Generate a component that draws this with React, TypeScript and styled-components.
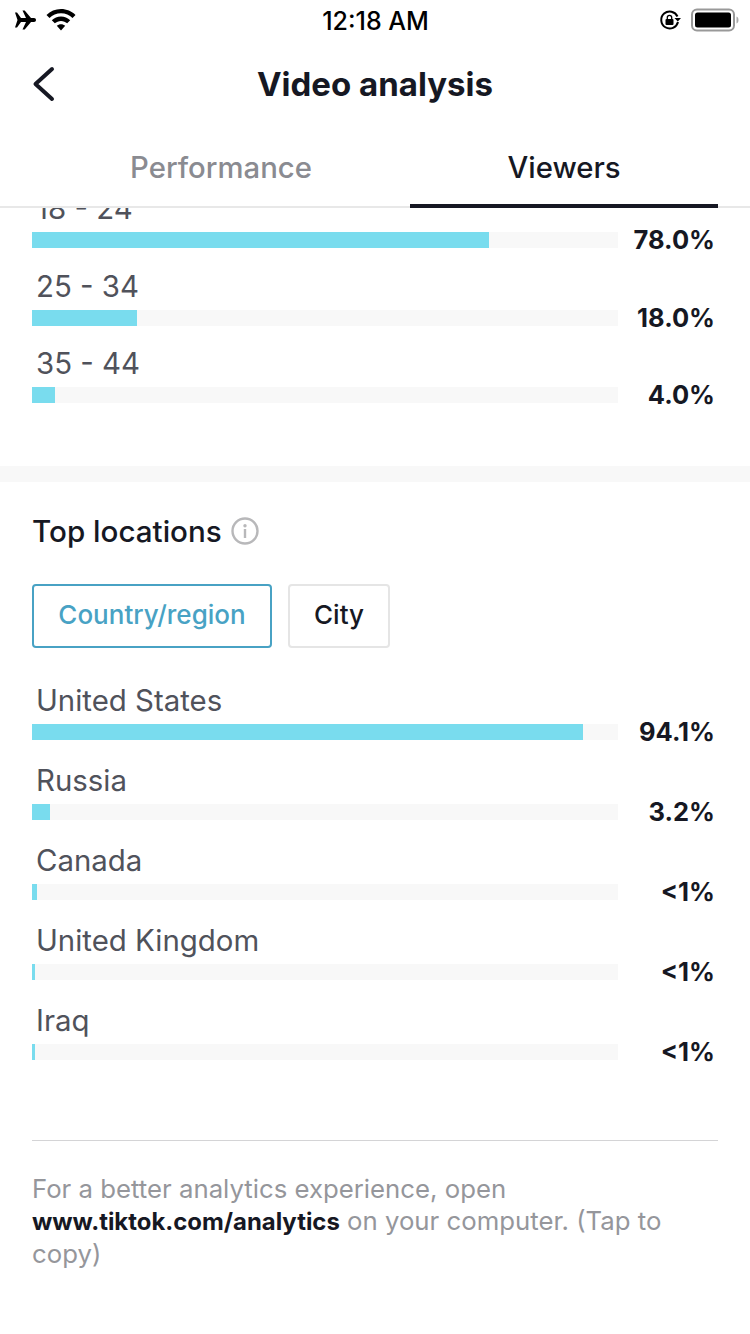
import styled, { createGlobalStyle } from "styled-components";

const GlobalStyle = createGlobalStyle`
  html, body {
    margin: 0;
    padding: 0;
    background: #fff;
  }

  body {
    font-family: "Inter", "Liberation Sans", sans-serif;
    color: #161823;
  }
`;

const Page = styled.div`
  width: 750px;
  height: 1334px;
  display: flex;
  flex-direction: column;
  overflow: hidden;
  background: #fff;
`;

const StatusBar = styled.div`
  height: 40px;
  flex: none;
  display: grid;
  grid-template-columns: 1fr auto 1fr;
  align-items: center;
  padding: 0 11px 0 12px;
  color: #000;
`;

const StatusLeft = styled.div`
  display: flex;
  align-items: center;
  gap: 10px;
  padding-left: 2px;
`;

const StatusRight = styled.div`
  display: flex;
  align-items: center;
  justify-content: flex-end;
  gap: 10px;
`;

const Clock = styled.div`
  font-size: 25px;
  font-weight: 500;
  padding-top: 1px;
`;

const NavBar = styled.div`
  height: 88px;
  flex: none;
  display: flex;
  align-items: center;
  justify-content: center;
  position: relative;
`;

const BackButton = styled.div`
  position: absolute;
  left: 31px;
  top: 26px;
  display: flex;
`;

const Title = styled.div`
  font-size: 33px;
  font-weight: 700;
`;

const Tabs = styled.div`
  height: 80px;
  flex: none;
  display: grid;
  grid-template-columns: 1fr 308px;
  padding: 0 32px;
  border-bottom: 2px solid #e8e8e8;
  box-sizing: border-box;
`;

const Tab = styled.div<{ $active?: boolean }>`
  display: flex;
  align-items: center;
  justify-content: center;
  font-size: 29.3px;
  font-weight: 500;
  padding-top: 2px;
  margin-bottom: -2px;
  color: ${({ $active }) => ($active ? "#161823" : "#8a8b91")};
  border-bottom: 4px solid ${({ $active }) => ($active ? "#161823" : "transparent")};
`;

const Scroller = styled.div`
  flex: 1;
  overflow: hidden;
`;

const AgeList = styled.div`
  padding: 0 32px;
  height: 258px;
  display: flex;
  flex-direction: column;
  gap: 37.5px;
  box-sizing: border-box;
`;

const LocationList = styled.div`
  padding: 0 32px;
  display: flex;
  flex-direction: column;
  gap: 40px;
`;

const Row = styled.div`
  height: 40px;
  display: grid;
  grid-template-columns: 586px 1fr;
  position: relative;
`;

const RowLabel = styled.div`
  position: absolute;
  left: 4px;
  bottom: 21px;
  font-size: 29.4px;
  line-height: 36px;
  color: #50525b;
  white-space: nowrap;
`;

const Track = styled.div`
  height: 16px;
  margin-top: 24px;
  background: #f8f8f8;
`;

const Fill = styled.div`
  height: 100%;
  background: #79dcee;
`;

const Percent = styled.div`
  margin-top: 18px;
  padding-right: 3px;
  text-align: right;
  font-size: 25.5px;
  line-height: 28px;
  font-weight: 700;
  white-space: nowrap;
`;

const Divider = styled.div`
  height: 16px;
  background: #f8f8f8;
`;

const SectionHead = styled.div`
  display: flex;
  align-items: center;
  gap: 9px;
  padding: 30px 32px 2px;
  height: 38px;
`;

const SectionTitle = styled.div`
  font-size: 29.6px;
  font-weight: 500;
`;

const Filters = styled.div`
  display: flex;
  gap: 16px;
  padding: 32px 32px 0;
  height: 64px;
  margin-bottom: 52px;
`;

const Filter = styled.div<{ $active?: boolean; $width: number }>`
  width: ${({ $width }) => $width}px;
  height: 64px;
  box-sizing: border-box;
  display: flex;
  align-items: center;
  justify-content: center;
  border-radius: 4px;
  font-size: 26px;
  font-weight: 500;
  padding-bottom: 3px;
  border: 2px solid ${({ $active }) => ($active ? "#48a2c4" : "#e5e5e5")};
  color: ${({ $active }) => ($active ? "#48a2c4" : "#161823")};
`;

const Footer = styled.div`
  margin: 80px 32px 0;
  padding-top: 32px;
  border-top: 1px solid #d4d4d6;
  font-size: 25.75px;
  line-height: 32px;
  color: #95969b;
`;

const FooterLink = styled.span`
  font-size: 23.9px;
  font-weight: 700;
  color: #161823;
`;

const ages = [
  { label: "18 - 24", value: "78.0%", width: 457 },
  { label: "25 - 34", value: "18.0%", width: 105 },
  { label: "35 - 44", value: "4.0%", width: 23 },
];

const locations = [
  { label: "United States", value: "94.1%", width: 551 },
  { label: "Russia", value: "3.2%", width: 18 },
  { label: "Canada", value: "<1%", width: 5 },
  { label: "United Kingdom", value: "<1%", width: 3 },
  { label: "Iraq", value: "<1%", width: 3 },
];

const BarRow = ({ label, value, width }: { label: string; value: string; width: number }) => (
  <Row>
    <RowLabel>{label}</RowLabel>
    <Track>
      <Fill style={{ width }} />
    </Track>
    <Percent>{value}</Percent>
  </Row>
);

const App = () => (
  <Page>
    <GlobalStyle />
    <StatusBar>
      <StatusLeft>
        <svg width="22" height="20" viewBox="0 0 22 20">
          <path
            d="M1 2.500h2l4 5.500h5L8.500 0.500h2.200L17 8h3c1.200 0 2 .9 2 2s-.8 2-2 2h-3l-6.300 7.500H8.500L12 12H7l-4 5.500H1L3.500 10z"
            fill="#000"
          />
        </svg>
        <svg width="30" height="22" viewBox="0 0 30 22">
          <path
            d="M15 0c5.600 0 10.800 2.200 14.500 5.900l-3 3C23.500 6 19.500 4.300 15 4.300S6.500 6 3.500 8.900l-3-3C4.200 2.200 9.400 0 15 0z"
            fill="#000"
          />
          <path
            d="M15 7.600c3.500 0 6.800 1.400 9.200 3.700l-3 3c-1.600-1.500-3.800-2.400-6.200-2.400s-4.600.9-6.200 2.400l-3-3c2.400-2.300 5.700-3.700 9.200-3.700z"
            fill="#000"
          />
          <path d="M15 15.200c1.600 0 3.100.6 4.200 1.600L15 21.500l-4.200-4.700c1.100-1 2.600-1.600 4.200-1.600z" fill="#000" />
        </svg>
      </StatusLeft>
      <Clock>12:18 AM</Clock>
      <StatusRight>
        <svg width="22" height="22" viewBox="0 0 22 22">
          <path d="M18.500 7.500A8.500 8.500 0 1 0 19 13" fill="none" stroke="#000" strokeWidth="2" />
          <path d="M15.500 9h6.500l-3.200 3.500z" fill="#000" />
          <rect x="6.500" y="10" width="8" height="6" rx="1" fill="#000" />
          <path d="M8.300 10V8.500a2.200 2.200 0 0 1 4.400 0V10" fill="none" stroke="#000" strokeWidth="1.300" />
        </svg>
        <svg width="48" height="24" viewBox="0 0 48 24">
          <rect x="1" y="1.500" width="42" height="21" rx="5" fill="none" stroke="#999" strokeWidth="2" />
          <rect x="4" y="4.500" width="36" height="15" rx="2.500" fill="#000" />
          <path d="M45.500 8.500c1.300.4 2 1.800 2 3.500s-.7 3.100-2 3.500z" fill="#aaa" />
        </svg>
      </StatusRight>
    </StatusBar>

    <NavBar>
      <BackButton>
        <svg width="24" height="36" viewBox="0 0 24 36">
          <path d="M21 3L4.500 18 21 33" fill="none" stroke="#161823" strokeWidth="4" strokeLinecap="round" strokeLinejoin="round" />
        </svg>
      </BackButton>
      <Title>Video analysis</Title>
    </NavBar>

    <Tabs>
      <Tab>Performance</Tab>
      <Tab $active>Viewers</Tab>
    </Tabs>

    <Scroller>
      <AgeList>
        {ages.map((row) => (
          <BarRow key={row.label} {...row} />
        ))}
      </AgeList>
      <Divider />
      <SectionHead>
        <SectionTitle>Top locations</SectionTitle>
        <svg width="28" height="28" viewBox="0 0 28 28">
          <circle cx="14" cy="14" r="12.500" fill="none" stroke="#b8b8ba" strokeWidth="2.400" />
          <circle cx="14" cy="8.800" r="1.700" fill="#b8b8ba" />
          <rect x="12.800" y="12" width="2.400" height="9" fill="#b8b8ba" />
        </svg>
      </SectionHead>
      <Filters>
        <Filter $active $width={240}>Country/region</Filter>
        <Filter $width={102}>City</Filter>
      </Filters>
      <LocationList>
        {locations.map((row) => (
          <BarRow key={row.label} {...row} />
        ))}
      </LocationList>
      <Footer>
        For a better analytics experience, open <FooterLink>www.tiktok.com/analytics</FooterLink> on your computer. (Tap to copy)
      </Footer>
    </Scroller>
  </Page>
);

export default App;
